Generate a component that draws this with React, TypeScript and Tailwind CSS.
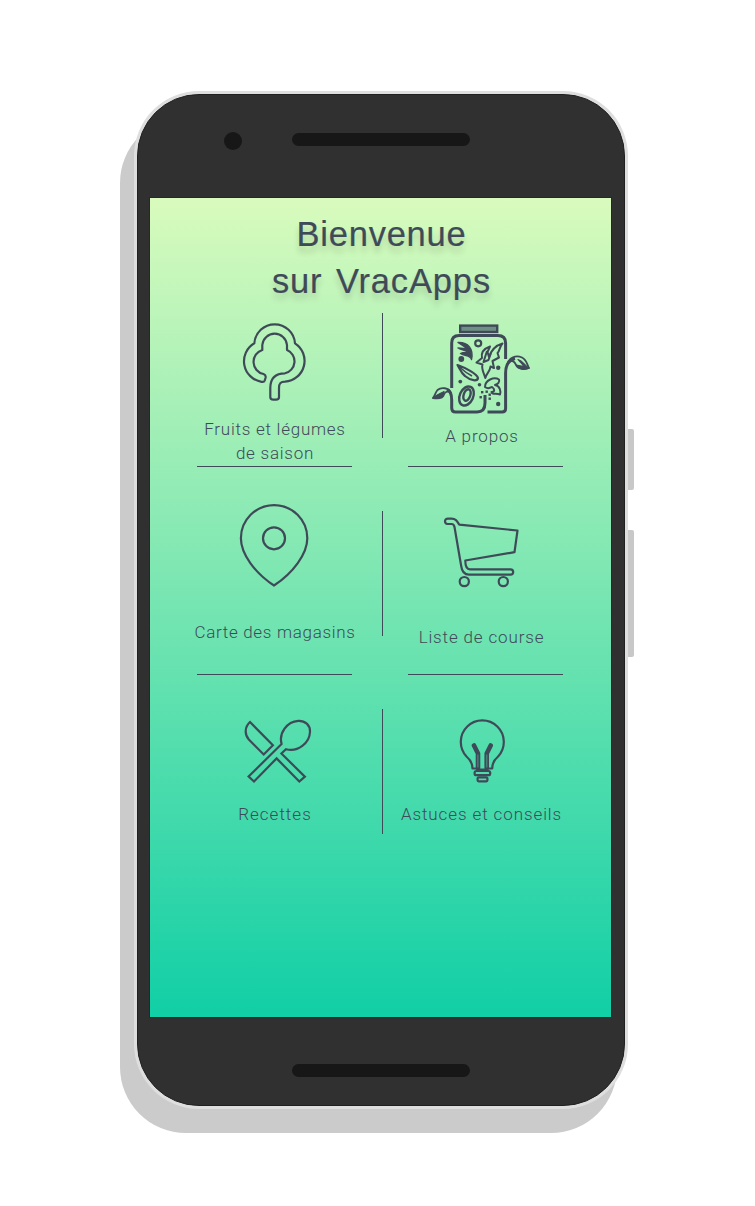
import type { ReactNode } from "react";

const INK = "#3f4a58";

function TreeIcon() {
  return (
    <svg width="70" height="84" viewBox="0 0 70 84" fill="none" stroke={INK} strokeWidth="2.2" strokeLinejoin="round">
      <path d="M14.3 23.3A20.4 20.4 0 0 1 55 23.3A20.9 20.9 0 0 1 45 61.7C40 61.7 39 64 39 68V77Q39 79.700 36 79.700H33.3Q30.3 79.700 30.3 77V68C30.3 58 36 53.3 45 53.3A12.3 12.3 0 0 0 47 30Q47 27 47 25A12.4 12.4 0 0 0 22.3 25Q22.3 27 22.3 30A12.4 12.4 0 0 0 23.5 54Q26.3 55 25.5 58L24.8 60.3Q24 62.5 21.5 61.8A20.8 20.8 0 0 1 14.3 23.3Z" />
    </svg>
  );
}

function JarIcon() {
  return (
    <svg width="112" height="102" viewBox="0 0 112 102" fill="none" stroke={INK} strokeWidth="3" strokeLinejoin="round">
      <rect x="35.2" y="10.6" width="37" height="6.4" fill="#6f8f85" strokeWidth="2.4" strokeLinejoin="miter" />
      <path d="M26.7 73V28Q26.7 20.5 34 20.5H73Q80.6 20.5 80.6 28V44" />
      <path d="M62.5 97H77Q80.6 97 80.6 93.5V58C80.6 50 84 45 90 43.5" />
      <path d="M22 74.5C26 76 26.7 80 26.7 85V93Q26.7 97 30.5 97H52Q60 97 60 88V80" />
      <path d="M82 50C84 42 91 40 97 42.5C102 45 102 50 104 53C99 55 93 54 91 50C90 47 89 46 86 45.5" strokeWidth="1.8" />
      <path d="M93 44.5C98 46 99 50 104 53.3C99 55 93 54 91.5 50C95 51 97 51 99 51.5C97 48.5 95 47 93 44.5Z" fill={INK} strokeWidth="1.2" />
      <path d="M26 79C24 72 16 72 12.5 75C10 78 10 81 8 83C14 84 18 83 19 79.5C20 77 22 76 24 77" strokeWidth="1.8" />
      <path d="M8 83C11 80 14 79 19 76.5C19 81 15 84 8 83Z" fill={INK} strokeWidth="1.2" />
      <circle cx="53.2" cy="28.3" r="3" strokeWidth="2.2" />
      <circle cx="36.3" cy="44" r="1.8" strokeWidth="2.2" fill={INK} />
      <path d="M33 27.5C43 27 49 34 46.5 44.5C45.5 40 40 41.5 35.5 38.5C38 37 41 37.5 43.5 37.5C40 34 36 35.5 33 33C37 33 40 33.5 42.5 34.5C40 31 36 29.5 33 27.5Z" fill={INK} strokeWidth="1.4" />
      <path d="M77.5 28.5C69 31 66 36 64 42L62.5 37L65 31.5C58 34 56 38 57 43L51.5 47.5L57.5 49.5C56 54 59 58 60.3 63C61.5 58 65 57 65.5 51.5L69 53L67.5 46L74 42.5L72.5 38C75 36 74 32 77.5 28.5Z" strokeWidth="2" />
      <path d="M62 36L58.5 47L63.5 45L66 38" strokeWidth="2" />
      <path d="M32.5 50C41 53 52 59 53 63C52.5 66.5 46 66 40 61C36 58 35 54 32.5 50Z" strokeWidth="2.2" />
      <path d="M35 52.5C40 57 43 59 47 61" strokeWidth="1.6" />
      <ellipse cx="41.5" cy="81" rx="6.7" ry="10" transform="rotate(24 41.5 81)" strokeWidth="2.4" />
      <ellipse cx="42" cy="80" rx="3.3" ry="6" transform="rotate(20 42 80)" strokeWidth="2.4" />
      <path d="M60 72C60 65 69 61.5 74 64.5C75 67 73 69 70 70C75 71 76 76 75 79.5C71 78 67 80 66.5 77C70 77 70 74 67 72C65 72 64 75 60 72Z" strokeWidth="2" />
      <g fill={INK} stroke="none">
        <circle cx="73.2" cy="52.8" r="2.2" />
        <circle cx="35.3" cy="66.6" r="1.9" />
        <circle cx="54.5" cy="69.7" r="1.8" />
        <circle cx="73.2" cy="89" r="2.2" />
        <rect x="56" y="76" width="2.4" height="2.4" />
        <rect x="60.5" y="75.5" width="2.4" height="2.4" />
        <rect x="54.5" y="81" width="2.4" height="2.4" />
        <rect x="63.5" y="78.5" width="2.4" height="2.4" />
        <rect x="63.5" y="82.5" width="2.4" height="2.4" />
      </g>
    </svg>
  );
}

function PinIcon() {
  return (
    <svg width="76" height="90" viewBox="0 0 76 90" fill="none" stroke={INK} strokeWidth="2.2">
      <path d="M4.9 38.3A33.2 33.2 0 0 1 71.3 38.3C71.3 54 57 73 38 85.5C19 73 4.9 54 4.9 38.3Z" />
      <circle cx="38" cy="38.3" r="11" />
    </svg>
  );
}

function CartIcon() {
  return (
    <svg width="84" height="76" viewBox="0 0 84 76" fill="none" stroke={INK} strokeWidth="2.2" strokeLinejoin="round">
      <path d="M7.5 10Q5 9.5 5 7.2Q5 4.7 8 4.7H11.5C16 4.7 17 7 19.3 10.7L77.5 16.5L74.5 38.2L25.3 46.5C25.3 51 26 55.3 30 55.3H70.5Q73.2 55.3 73.2 58Q73.2 60.6 70.5 60.6H29C24 60.6 21.8 57 21.2 52L14.5 13Q14 10 11.5 10Z" />
      <circle cx="24.3" cy="67.6" r="4.6" />
      <circle cx="63.3" cy="67.6" r="4.6" />
    </svg>
  );
}

function UtensilsIcon() {
  return (
    <svg width="76" height="72" viewBox="0 0 76 72" fill="none" stroke={INK} strokeWidth="2.2">
      <path d="M10 7L32.9 30.3L23.7 39.5L8.8 24.5C4.5 19.5 4.5 12 10 7Z" />
      <path d="M41.4 38.5L64.9 61.7L59.3 66.5L36.6 43.4L14 66.5L8.6 61.5L41.6 29C38.5 18 47 6.5 58.3 5.8C65 5.5 70.3 10 70 17C69.5 28 58 37.5 46 34.2Z" />
    </svg>
  );
}

function BulbIcon() {
  return (
    <svg width="56" height="70" viewBox="0 0 56 70" fill="none" stroke={INK} strokeWidth="2.2" strokeLinecap="round" strokeLinejoin="round">
      <path d="M22 53.5H17.5C17.5 47.5 14.5 44 11.5 41.5A21.5 21.5 0 1 1 43.1 41.5C40 44 37.2 47.5 37.2 53.5H32.5" />
      <path d="M19 30.5L23 38.5V53.5M35.7 30.5L31.7 38.5V53.5" strokeWidth="4.6" />
      <path d="M22.9 40V52M31.8 40V52" stroke="#4f9b8b" strokeWidth="0.9" />
      <rect x="19.6" y="56" width="15.6" height="4.2" rx="1.8" />
      <rect x="22.6" y="62.3" width="9.8" height="4" rx="1" />
      <path d="M24 54.7H31" />
    </svg>
  );
}

function Tile({ icon, label, iconClass, labelClass, className }: {
  icon: ReactNode;
  label: ReactNode;
  iconClass: string;
  labelClass: string;
  className: string;
}) {
  return (
    <button className={`flex flex-col items-center border-[#3f4a58] ${className}`}>
      <span className={`block shrink-0 ${iconClass}`}>{icon}</span>
      <span className={`block whitespace-nowrap text-center leading-6 ${labelClass}`}>{label}</span>
    </button>
  );
}

function Divider({ className }: { className: string }) {
  return <div className={`ml-[29.5px] h-[125px] w-px bg-[#3f4a58] ${className}`} />;
}

export default function App() {
  return (
    <div className="relative h-[1206px] w-[755px] overflow-hidden bg-white pl-[134px] pt-[91px]">
      <div className="absolute left-[120px] top-[117px] h-[1016px] w-[497px] rounded-[66px] bg-[#cbcbcb]" />
      <div className="absolute left-[625px] top-[429px] h-[61px] w-[9px] rounded-[2px] bg-[#c8c8c8]" />
      <div className="absolute left-[625px] top-[530px] h-[127px] w-[9px] rounded-[2px] bg-[#c8c8c8]" />

      <div className="relative h-[1018px] w-[494px] rounded-[65px] bg-[#dedede] pl-[3px] pt-[3px]">
        <div className="flex h-[1012px] w-[488px] flex-col rounded-[62px] border border-[#202020] bg-[#303030] px-[12px]">
          <div className="flex h-[103px] shrink-0 items-start">
            <div className="ml-[74px] mt-[37px] size-[18px] rounded-full bg-[#171717]" />
            <div className="ml-[50px] mt-[38px] h-[13px] w-[178px] rounded-full bg-[#171717]" />
          </div>

          <main className="flex h-[819px] w-[461px] shrink-0 flex-col bg-linear-to-b/srgb from-[#d9fbbd] to-[#11cfa6] text-[#3f4a58] outline outline-[#00000030]">
            <h1 className="h-[115px] pl-[2px] pt-[13px] text-center font-['Liberation_Sans',sans-serif] text-[34.5px] leading-[47px] [-webkit-text-stroke:0.2px_#3f4a58] [text-shadow:0_6px_6px_rgba(0,0,0,0.16)]">
              <span className="tracking-[0.75px]">Bienvenue</span>
              <br />
              <span className="tracking-[0.85px] [word-spacing:3px]">sur VracApps</span>
            </h1>

            <nav className="ml-[47px] grid w-[366px] grid-cols-[155px_56px_155px] grid-rows-[154px_208px_160px] font-[Roboto,sans-serif] text-[17px] font-light">
              <Tile
                className="border-b"
                icon={<TreeIcon />}
                iconClass="mt-[7px]"
                label={<>Fruits et légumes<br />de saison</>}
                labelClass="mt-[13px] pl-px tracking-[0.75px]"
              />
              <Divider className="" />
              <Tile
                className="border-b pr-2"
                icon={<JarIcon />}
                iconClass="mt-[2px] mr-px"
                label="A propos"
                labelClass="mt-[7px] pl-px tracking-[0.85px]"
              />

              <Tile
                className="border-b"
                icon={<PinIcon />}
                iconClass="mt-[33px] mr-px"
                label="Carte des magasins"
                labelClass="mt-[30px] pl-px tracking-[0.68px]"
              />
              <Divider className="mt-[44px]" />
              <Tile
                className="border-b pr-2"
                icon={<CartIcon />}
                iconClass="mt-[47px]"
                label="Liste de course"
                labelClass="mt-[35px] tracking-[0.85px]"
              />

              <Tile
                className=""
                icon={<UtensilsIcon />}
                iconClass="mt-[40px] ml-[7px]"
                label="Recettes"
                labelClass="mt-[15px] pl-px tracking-[1px]"
              />
              <Divider className="mt-[34px]" />
              <Tile
                className="pr-2"
                icon={<BulbIcon />}
                iconClass="mt-[40px] ml-[3px]"
                label="Astuces et conseils"
                labelClass="mt-[17px] tracking-[0.9px]"
              />
            </nav>
          </main>

          <div className="ml-[142px] mt-[47px] h-[13px] w-[178px] rounded-full bg-[#171717]" />
        </div>
      </div>
    </div>
  );
}
